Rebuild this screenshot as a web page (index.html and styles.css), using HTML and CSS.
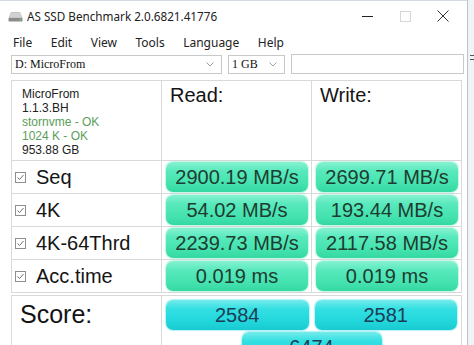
FILE: index.html
```html
<!DOCTYPE html>
<html>
<head>
<meta charset="utf-8">
<title>AS SSD Benchmark</title>
<link rel="stylesheet" href="styles.css">
</head>
<body>
<div class="screen">
  <div class="app">
    <div class="titlebar">
      <svg class="appicon" viewBox="0 0 15 11" width="15" height="11">
        <path d="M3 1 H12 L14.5 7 H0.5 Z" fill="#b9b9b9"/>
        <path d="M3.3 1.4 H11.7 L13.8 6.5 H1.2 Z" fill="#d2d2d2"/>
        <rect x="0.5" y="7" width="14" height="3.5" rx="0.8" fill="#8c8c8c"/>
        <rect x="11" y="8.2" width="2" height="1.2" fill="#5fd35f"/>
      </svg>
      <span class="title">AS SSD Benchmark 2.0.6821.41776</span>
      <div class="controls">
        <span class="ctl"><svg viewBox="0 0 11 11" width="11" height="11"><path d="M0 5.5 H11" stroke="#222" stroke-width="1"/></svg></span>
        <span class="ctl"><svg viewBox="0 0 11 11" width="11" height="11"><rect x="0.5" y="0.5" width="10" height="10" fill="none" stroke="#d6d6d6" stroke-width="1"/></svg></span>
        <span class="ctl"><svg viewBox="0 0 12 12" width="12" height="12"><path d="M0.5 0.5 L11.5 11.5 M11.5 0.5 L0.5 11.5" stroke="#333" stroke-width="1"/></svg></span>
      </div>
    </div>
    <div class="menubar">
      <span>File</span><span>Edit</span><span>View</span><span>Tools</span><span>Language</span><span>Help</span>
    </div>
    <div class="toolbar">
      <div class="combo drive"><span class="combo-text">D: MicroFrom</span><svg class="chev" viewBox="0 0 8 5" width="8" height="5"><path d="M0.5 0.5 L4 4 L7.5 0.5" fill="none" stroke="#a0a0a0" stroke-width="1"/></svg></div>
      <div class="combo size"><span class="combo-text">1 GB</span><svg class="chev" viewBox="0 0 8 5" width="8" height="5"><path d="M0.5 0.5 L4 4 L7.5 0.5" fill="none" stroke="#a0a0a0" stroke-width="1"/></svg></div>
      <div class="textbox"></div>
    </div>

    <div class="results">
      <div class="cell info">
        <div>MicroFrom</div>
        <div>1.1.3.BH</div>
        <div class="ok">stornvme - OK</div>
        <div class="ok">1024 K - OK</div>
        <div>953.88 GB</div>
      </div>
      <div class="cell head">Read:</div>
      <div class="cell head">Write:</div>

      <div class="cell label"><svg class="check" viewBox="0 0 11 11" width="11" height="11"><rect x="0.5" y="0.5" width="10" height="10" fill="#fff" stroke="#8e8e8e"/><path d="M2.5 5.5 L4.5 7.5 L8.5 3" fill="none" stroke="#6e6e6e" stroke-width="1"/></svg>Seq</div>
      <div class="cell val"><div class="pill green">2900.19 MB/s</div></div>
      <div class="cell val"><div class="pill green">2699.71 MB/s</div></div>

      <div class="cell label"><svg class="check" viewBox="0 0 11 11" width="11" height="11"><rect x="0.5" y="0.5" width="10" height="10" fill="#fff" stroke="#8e8e8e"/><path d="M2.5 5.5 L4.5 7.5 L8.5 3" fill="none" stroke="#6e6e6e" stroke-width="1"/></svg>4K</div>
      <div class="cell val"><div class="pill green">54.02 MB/s</div></div>
      <div class="cell val"><div class="pill green">193.44 MB/s</div></div>

      <div class="cell label"><svg class="check" viewBox="0 0 11 11" width="11" height="11"><rect x="0.5" y="0.5" width="10" height="10" fill="#fff" stroke="#8e8e8e"/><path d="M2.5 5.5 L4.5 7.5 L8.5 3" fill="none" stroke="#6e6e6e" stroke-width="1"/></svg>4K-64Thrd</div>
      <div class="cell val"><div class="pill green">2239.73 MB/s</div></div>
      <div class="cell val"><div class="pill green">2117.58 MB/s</div></div>

      <div class="cell label"><svg class="check" viewBox="0 0 11 11" width="11" height="11"><rect x="0.5" y="0.5" width="10" height="10" fill="#fff" stroke="#8e8e8e"/><path d="M2.5 5.5 L4.5 7.5 L8.5 3" fill="none" stroke="#6e6e6e" stroke-width="1"/></svg>Acc.time</div>
      <div class="cell val"><div class="pill green">0.019 ms</div></div>
      <div class="cell val"><div class="pill green">0.019 ms</div></div>
    </div>

    <div class="score">
      <div class="cell score-label">Score:</div>
      <div class="cell score-vals">
        <div class="pill cyan">2584</div>
        <div class="pill cyan">2581</div>
        <div class="pill cyan total">6474</div>
      </div>
    </div>
  </div>
  <div class="edge"><span class="edge-mark"></span></div>
</div>
</body>
</html>
```

FILE: styles.css
```css
* {
  box-sizing: border-box;
  margin: 0;
  padding: 0;
}

html, body {
  width: 474px;
  height: 345px;
  overflow: hidden;
  background: #fff;
}

body {
  font-family: "Liberation Sans", Arial, sans-serif;
  color: #1a1a1a;
}

.screen {
  display: flex;
  width: 474px;
  height: 345px;
}

.app {
  width: 467px;
  height: 345px;
  border-top: 1px solid #d3dae1;
  background: #fff;
}

.edge {
  width: 7px;
  height: 345px;
  border-left: 1px solid #b9c3cd;
  background: #f1f4f7;
  padding-top: 55px;
  padding-left: 2px;
}

.edge-mark {
  display: block;
  width: 5px;
  height: 5px;
  border-top: 1px solid #555;
  border-bottom: 1px solid #555;
}

/* title bar */
.titlebar {
  height: 30px;
  display: flex;
  align-items: center;
  font-family: "Noto Sans", sans-serif;
  font-size: 11.7px;
  color: #222;
}

.appicon {
  margin-left: 8px;
  flex: none;
}

.title {
  margin-left: 4px;
}

.controls {
  margin-left: auto;
  margin-right: 5px;
  display: flex;
}

.ctl {
  width: 38px;
  height: 30px;
  display: flex;
  align-items: center;
  justify-content: center;
}

/* menu */
.menubar {
  height: 22px;
  display: flex;
  align-items: center;
  gap: 18.5px;
  padding-left: 13px;
  font-family: "Noto Sans", sans-serif;
  font-size: 12px;
  color: #222;
}

/* toolbar */
.toolbar {
  display: flex;
  padding: 2px 0 0 11px;
  height: 21px;
  gap: 6px;
}

.combo {
  height: 19px;
  border: 1px solid #c9c9c9;
  display: flex;
  align-items: center;
  padding: 0 7px 0 3px;
  font-family: "Liberation Serif", serif;
  font-size: 12px;
  color: #111;
}

.combo-text {
  flex: 1;
}

.drive {
  width: 211px;
}

.size {
  width: 57px;
}

.textbox {
  width: 173px;
  height: 20px;
  margin-top: -1px;
  border: 1px solid #c9c9c9;
}

/* results grid */
.results {
  margin: 6px 0 0 11px;
  width: 451px;
  display: grid;
  grid-template-columns: repeat(3, 150px);
  grid-template-rows: 80px repeat(4, 33px);
  border-left: 1px solid #d9d9d9;
  border-top: 1px solid #d9d9d9;
}

.cell {
  border-right: 1px solid #d9d9d9;
  border-bottom: 1px solid #d9d9d9;
}

.info {
  padding: 6px 0 0 10px;
  font-size: 12px;
  line-height: 14px;
  color: #222;
}

.info .ok {
  color: #5a9e5a;
}

.head {
  padding: 2px 0 0 8px;
  font-size: 20px;
  line-height: 24px;
  color: #141414;
}

.label {
  display: flex;
  align-items: center;
  padding-left: 3px;
  font-size: 20px;
  color: #141414;
}

.check {
  margin-right: 10px;
  flex: none;
}

.val {
  padding: 1px 3px 1px 4px;
}

.pill {
  height: 30px;
  border-radius: 7px;
  text-align: center;
  font-size: 20px;
  line-height: 30px;
}

.green {
  background: linear-gradient(to bottom, #86f2d1 0%, #58e9bc 30%, #45e3af 70%, #34d8a2 100%);
  color: #1f3c31;
  box-shadow: 0 0 1px 1px rgba(120, 235, 195, 0.45);
}

.cyan {
  background: linear-gradient(to bottom, #74ebeb 0%, #33e0e2 30%, #22d7dc 70%, #18cbd2 100%);
  color: #1b3d58;
  box-shadow: 0 0 1px 1px rgba(90, 225, 230, 0.45);
}

/* score */
.score {
  margin: 2px 0 0 11px;
  width: 451px;
  height: 60px;
  display: grid;
  grid-template-columns: 150px 300px;
  border-left: 1px solid #d9d9d9;
  border-top: 1px solid #d9d9d9;
}

.score-label {
  padding: 2px 0 0 8px;
  font-size: 25px;
  line-height: 32px;
  color: #141414;
}

.score-vals {
  display: grid;
  grid-template-columns: 1fr 1fr;
  column-gap: 6px;
  row-gap: 2px;
  padding: 4px 4px 0 4px;
  align-content: start;
}

.total {
  grid-column: 1 / span 2;
  justify-self: center;
  width: 140px;
}
```
